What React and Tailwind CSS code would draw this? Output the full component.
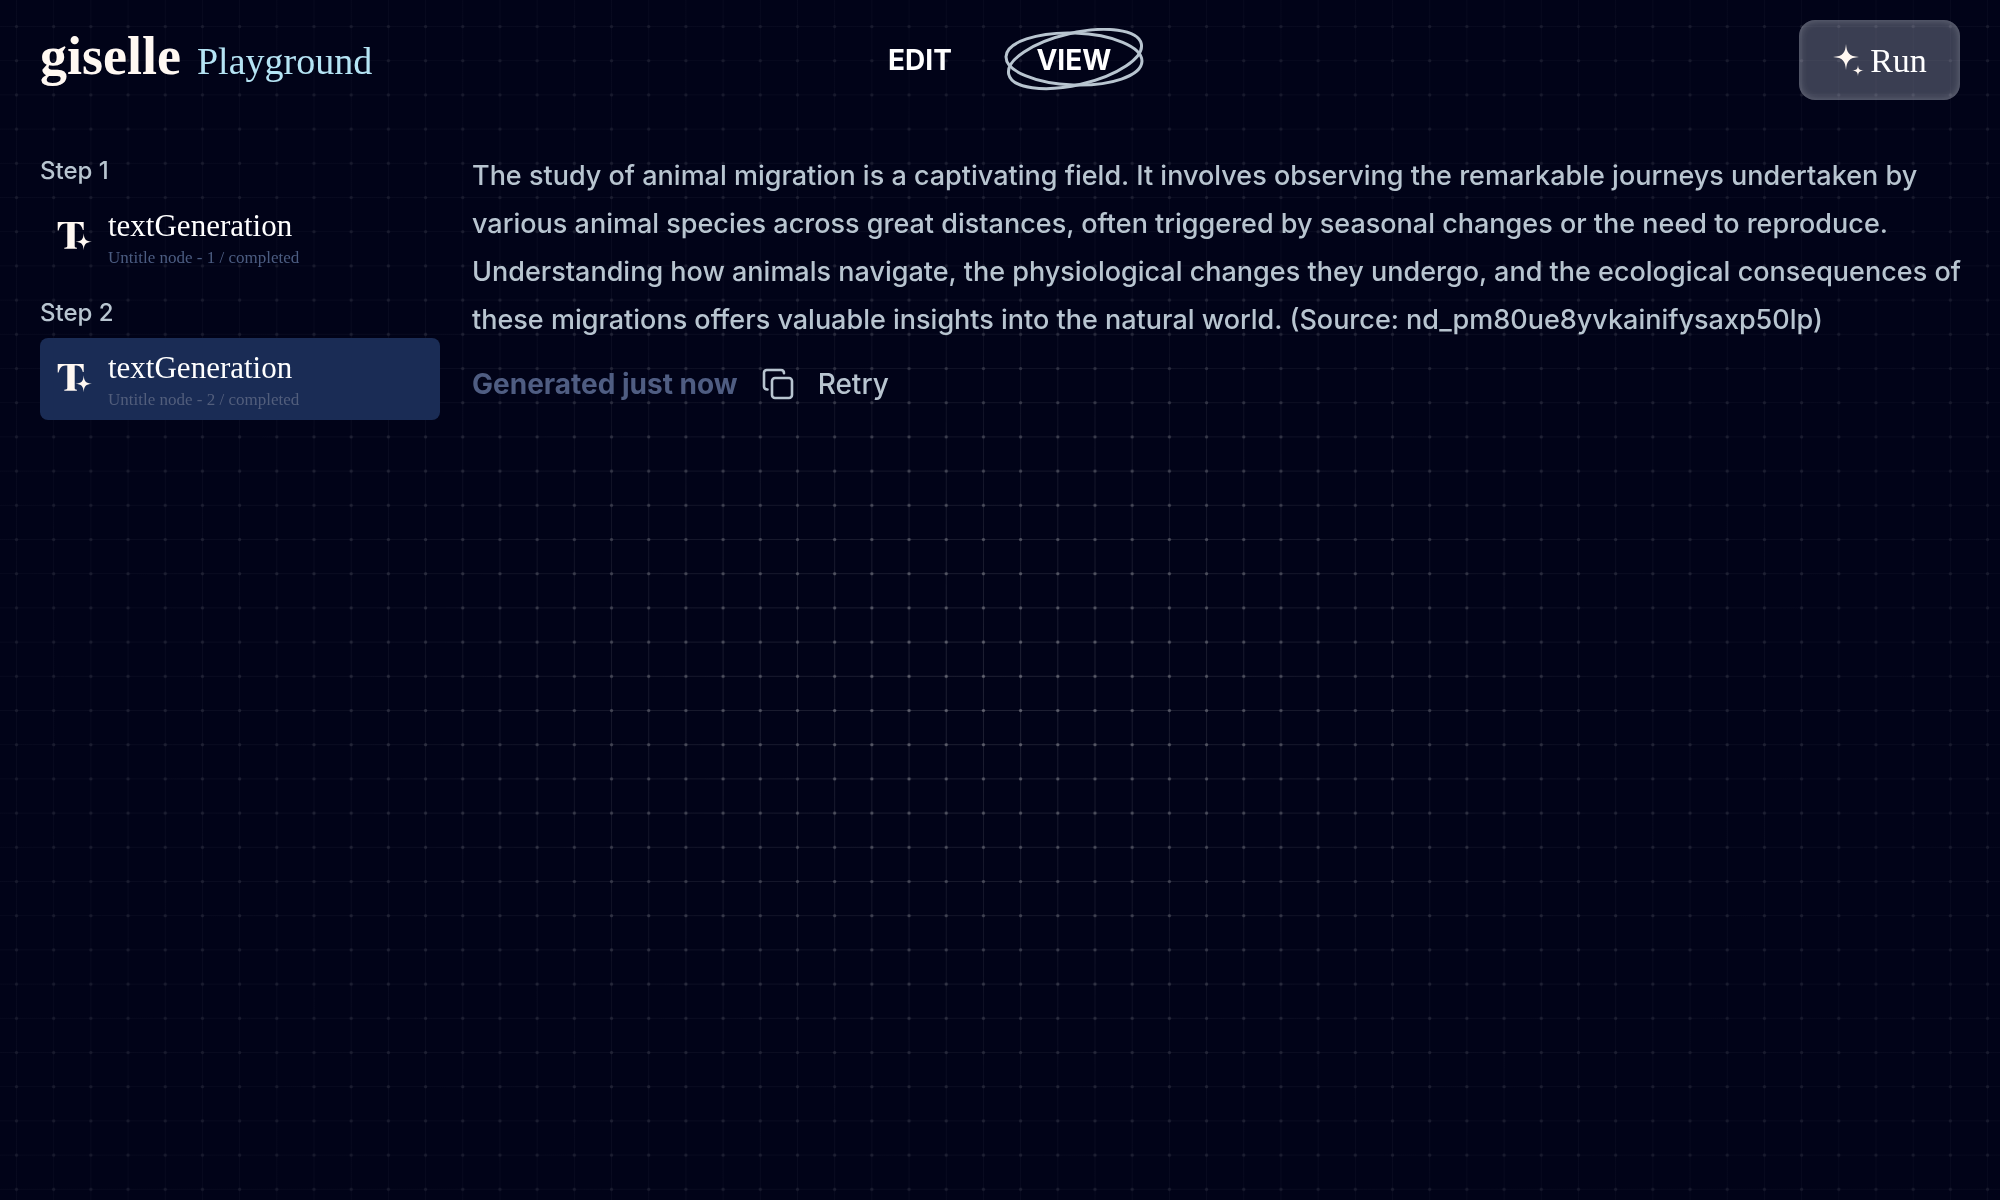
function GridBackdrop() {
  return (
    <svg className="pointer-events-none fixed inset-0 h-full w-full" aria-hidden="true">
      <defs>
        <pattern id="cells" x="16" y="26" width="37.19" height="34.2" patternUnits="userSpaceOnUse">
          <path d="M0 0.5H37.19M0.5 0V34.2" stroke="#fff" strokeOpacity="0.3" strokeWidth="1" />
        </pattern>
        <pattern id="dots" x="14" y="24" width="37.19" height="34.2" patternUnits="userSpaceOnUse">
          <circle cx="2.5" cy="2.5" r="1.6" fill="#fff" />
        </pattern>
        <radialGradient id="glow" cx="49%" cy="57%" r="50%">
          <stop offset="0" stopColor="#fff" stopOpacity="0.4" />
          <stop offset="0.3" stopColor="#fff" stopOpacity="0.3" />
          <stop offset="0.65" stopColor="#fff" stopOpacity="0.14" />
          <stop offset="1" stopColor="#fff" stopOpacity="0.1" />
        </radialGradient>
        <mask id="fade">
          <rect width="100%" height="100%" fill="url(#glow)" />
        </mask>
      </defs>
      <g mask="url(#fade)">
        <rect width="100%" height="100%" fill="url(#cells)" />
        <rect width="100%" height="100%" fill="url(#dots)" />
      </g>
    </svg>
  );
}

function Sparkles() {
  return (
    <svg width="32" height="34" viewBox="0 0 32 34" fill="#fff8f2" aria-hidden="true">
      <path d="M14 1C14.7 10 17 13.2 27 14C17 14.8 14.7 18 14 27C13.3 18 11 14.8 1 14C11 13.2 13.3 10 14 1Z" />
      <path d="M14 9L17.6 14L14 19L10.4 14Z" />
      <path d="M26 22C26.3 26 27.2 27.2 32 27.6C27.2 28 26.3 29.2 26 33.4C25.7 29.2 24.8 28 20 27.6C24.8 27.2 25.7 26 26 22Z" />
    </svg>
  );
}

function TextGenIcon() {
  return (
    <svg className="shrink-0" width="36" height="32" viewBox="0 0 36 32" fill="#fff8f2" aria-hidden="true">
      <path d="M1.7 1H27.7V9H26.8C25.8 4.6 23.8 2.6 20.6 2.4H18.7V25C18.7 26.3 19.2 26.6 20.9 26.7V27.8H8.3V26.7C10.4 26.6 11.3 26.3 11.3 25V2.4H9.2C5.8 2.6 3.8 4.8 2.6 9.4H1.7Z" />
      <path d="M27.7 12.2C28.2 18.6 29.8 20.2 36 20.7C29.8 21.2 28.2 22.8 27.7 29.2C27.2 22.8 25.6 21.2 19.4 20.7C25.6 20.2 27.2 18.6 27.7 12.2Z" />
      <path d="M27.7 17L30.6 20.7L27.7 24.4L24.8 20.7Z" />
    </svg>
  );
}

function CopyIcon() {
  return (
    <svg width="32" height="32" viewBox="0 0 32 32" fill="none" stroke="#b8c5d0" strokeWidth="2.6" strokeLinecap="round" aria-hidden="true">
      <rect x="10" y="10" width="20" height="20" rx="3" />
      <path d="M5.5 21.5C3.4 21.5 2 20.4 2 18.5V4.8C2 3 3.2 2 4.8 2H19C20.8 2 22 3.4 22 5.2" />
    </svg>
  );
}

function Step({ number, active }) {
  return (
    <section>
      <h2 className="text-[24px] leading-[38px] font-medium text-[#b8c5d0]">Step {number}</h2>
      <button
        type="button"
        className={
          active
            ? "mt-1.5 flex h-[82px] w-full items-center gap-4 rounded-lg bg-[#1a2c55] px-4 text-left"
            : "mt-1.5 flex h-[82px] w-full items-center gap-4 rounded-lg px-4 text-left"
        }
      >
        <TextGenIcon />
        <span className="flex flex-col pt-1 font-['Liberation_Serif',serif]">
          <span className="text-[31px] leading-[38px] text-white">textGeneration</span>
          <span className={active ? "text-[17px] leading-[26px] text-[#525e7c]" : "text-[17px] leading-[26px] text-[#4c5d82]"}>
            Untitle node - {number} / completed
          </span>
        </span>
      </button>
    </section>
  );
}

export default function App() {
  return (
    <div className="min-h-screen bg-[#010318] font-[Inter,sans-serif]">
      <GridBackdrop />
      <header className="relative grid h-[120px] grid-cols-[1fr_auto_1fr] items-center px-10">
        <div className="flex items-baseline gap-4 pb-2 font-['Liberation_Serif',serif]">
          <span className="text-[54px] leading-none font-bold text-[#fff8f2]">giselle</span>
          <span className="text-[38px] leading-none text-[#b5e4f4]">Playground</span>
        </div>
        <nav className="flex items-center gap-[52px] pl-8 text-[28px] font-bold text-white">
          <a href="#edit">EDIT</a>
          <a href="#view" className="relative flex h-[64px] w-[140px] items-center justify-center">
            <svg className="absolute inset-0" width="140" height="64" viewBox="0 0 140 64" fill="none" stroke="#b8c5d0" strokeWidth="3" aria-hidden="true">
              <ellipse cx="70" cy="31" rx="68" ry="26" transform="rotate(2 70 31)" />
              <ellipse cx="71" cy="31" rx="68" ry="26" transform="rotate(-13 71 31)" />
            </svg>
            <span className="relative">VIEW</span>
          </a>
        </nav>
        <button
          type="button"
          className="flex h-20 w-[161px] items-center justify-center gap-1.5 justify-self-end rounded-2xl bg-[#e8f0ff]/25 font-['Liberation_Serif',serif] text-[34px] text-white shadow-[inset_0_0_8px_rgba(255,255,255,0.25)]"
        >
          <Sparkles />
          Run
        </button>
      </header>
      <div className="relative flex gap-8 pt-8 pr-8 pl-10">
        <aside className="flex w-[400px] shrink-0 flex-col gap-4">
          <Step number={1} />
          <Step number={2} active />
        </aside>
        <main className="min-w-0 flex-1 text-[27px] leading-[48px] font-medium text-[#b8c5d0]">
          <p>
            The study of animal migration is a captivating field. It involves observing the remarkable journeys undertaken by
            various animal species across great distances, often triggered by seasonal changes or the need to reproduce.
            Understanding how animals navigate, the physiological changes they undergo, and the ecological consequences of
            these migrations offers valuable insights into the natural world. (Source: nd_pm80ue8yvkainifysaxp50lp)
          </p>
          <div className="mt-4 flex items-center gap-6 text-[28px]">
            <span className="font-bold text-[#4f5d82]">Generated just now</span>
            <button type="button" aria-label="Copy">
              <CopyIcon />
            </button>
            <button type="button">Retry</button>
          </div>
        </main>
      </div>
    </div>
  );
}
